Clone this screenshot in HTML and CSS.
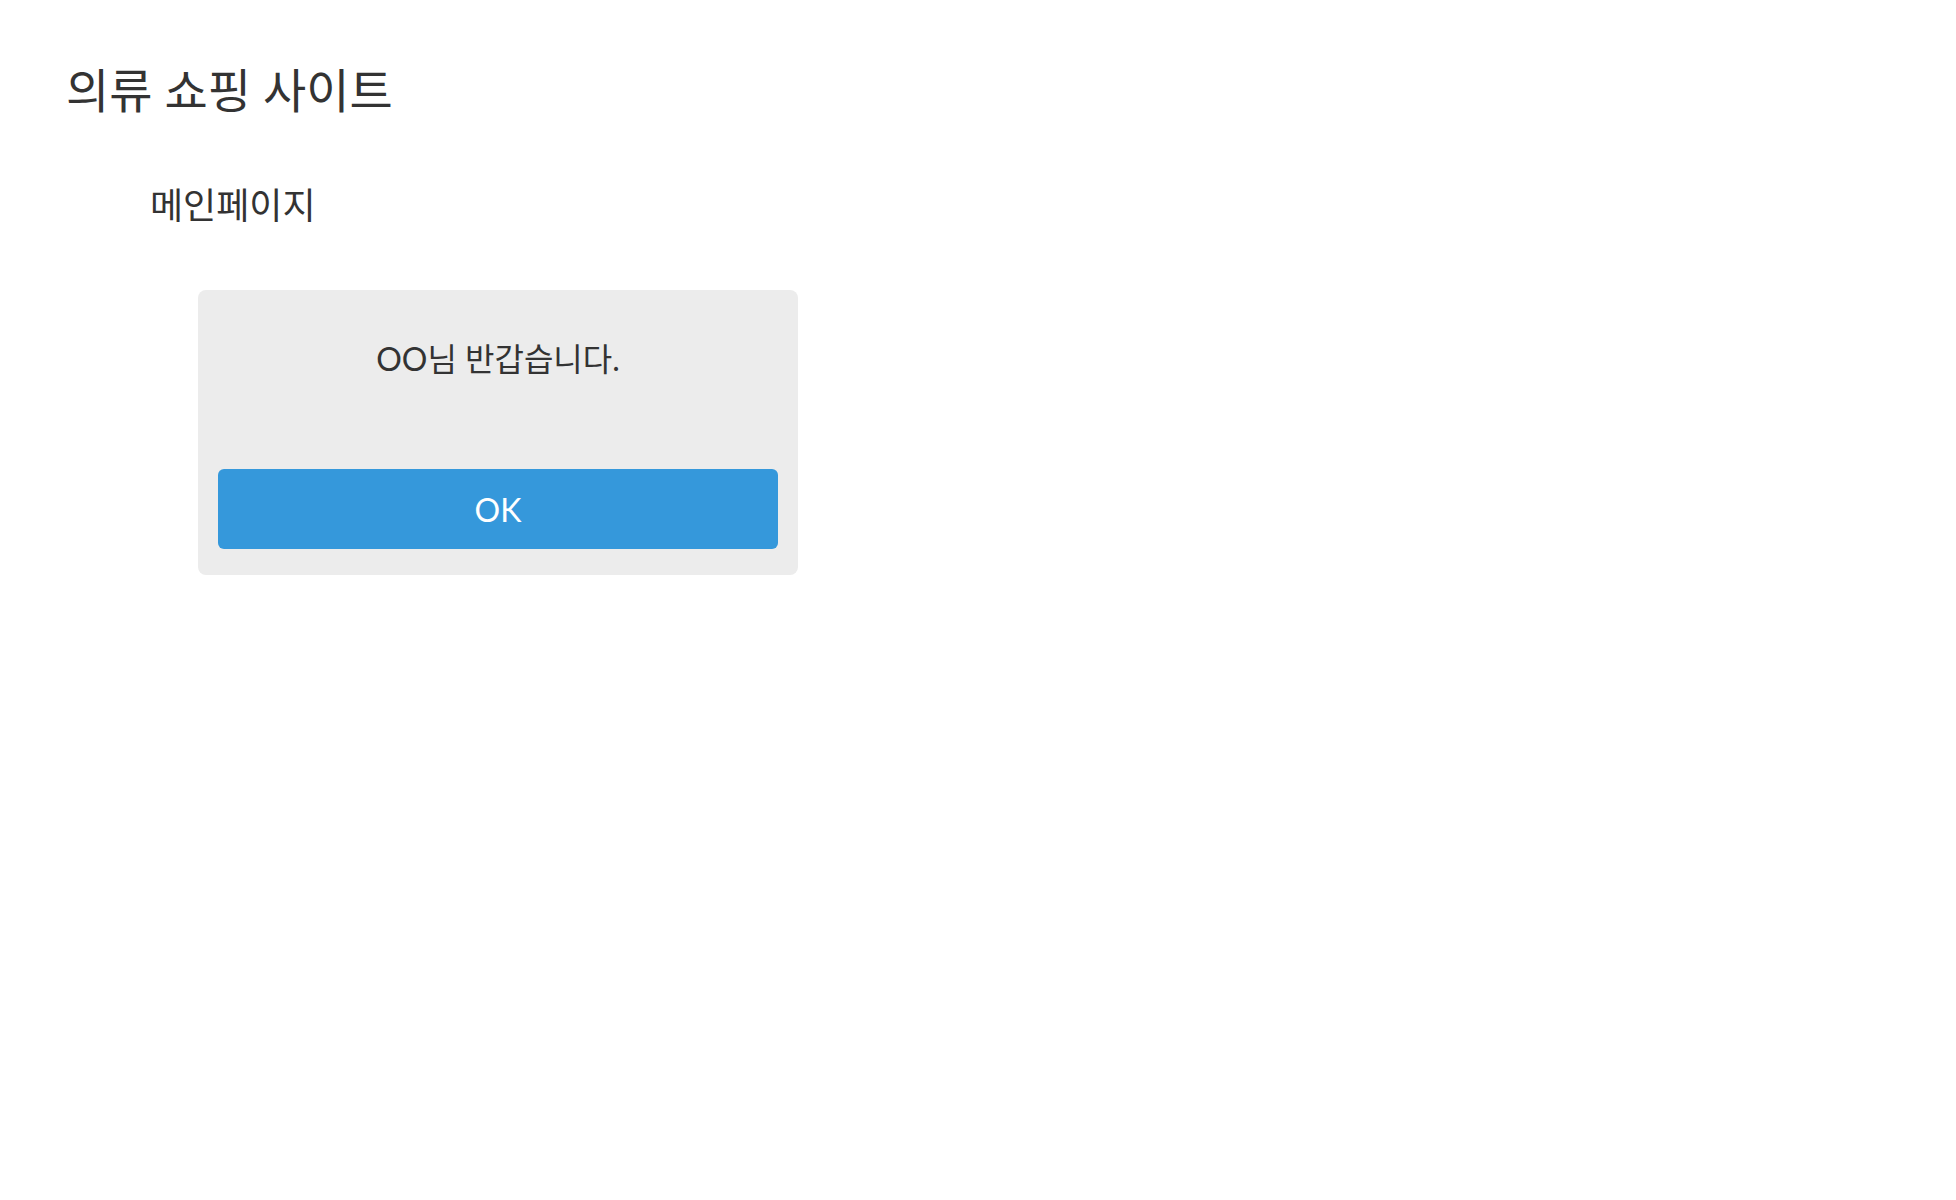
FILE: index.html
```html
<!DOCTYPE html>
<html lang="ko">
<head>
<meta charset="utf-8">
<title>의류 쇼핑 사이트</title>
<link rel="stylesheet" href="styles.css">
</head>
<body>
<div class="page">
  <h1 class="site-title">의류 쇼핑 사이트</h1>
  <nav class="menu"><a class="menu-link">메인페이지</a></nav>
  <div class="dialog">
    <p class="dialog-msg">OO님 반갑습니다.</p>
    <button class="dialog-btn">OK</button>
  </div>
</div>
</body>
</html>
```
FILE: styles.css
```css
html, body {
  margin: 0;
  padding: 0;
  background: #ffffff;
}
body {
  font-family: Lato, "Noto Sans CJK KR", sans-serif;
  color: #333333;
}
.page {
  padding: 60px 0 0 66px;
}
.site-title {
  margin: 0;
  font-size: 47px;
  font-weight: 400;
  line-height: 60px;
}
.menu {
  padding: 65px 0 0 84px;
  font-size: 36px;
  line-height: 40px;
}
.menu-link {
  color: #333333;
}
.dialog {
  margin: 65px 0 0 132px;
  width: 600px;
  box-sizing: border-box;
  background: #ececec;
  border-radius: 8px;
  padding: 49px 20px 26px;
  display: flex;
  flex-direction: column;
}
.dialog-msg {
  margin: 0 0 90px;
  text-align: center;
  font-size: 32px;
  line-height: 40px;
}
.dialog-btn {
  height: 80px;
  border: none;
  border-radius: 6px;
  background: #3598db;
  color: #ffffff;
  font-family: Lato, "Noto Sans CJK KR", sans-serif;
  font-size: 32px;
  padding: 0;
}
```
